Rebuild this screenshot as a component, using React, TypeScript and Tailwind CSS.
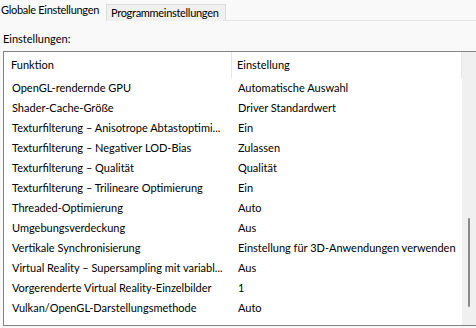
import React from 'react';

const rows: [string, string][] = [
  ['OpenGL-rendernde GPU', 'Automatische Auswahl'],
  ['Shader-Cache-Größe', 'Driver Standardwert'],
  ['Texturfilterung – Anisotrope Abtastoptimi...', 'Ein'],
  ['Texturfilterung – Negativer LOD-Bias', 'Zulassen'],
  ['Texturfilterung – Qualität', 'Qualität'],
  ['Texturfilterung – Trilineare Optimierung', 'Ein'],
  ['Threaded-Optimierung', 'Auto'],
  ['Umgebungsverdeckung', 'Aus'],
  ['Vertikale Synchronisierung', 'Einstellung für 3D-Anwendungen verwenden'],
  ['Virtual Reality – Supersampling mit variabl...', 'Aus'],
  ['Vorgerenderte Virtual Reality-Einzelbilder', '1'],
  ['Vulkan/OpenGL-Darstellungsmethode', 'Auto'],
];

export default function App() {
  return (
    <div
      className="w-[476px] h-[328px] overflow-hidden bg-[#f9f9f9] text-[11px] text-black flex flex-col"
      style={{ fontFamily: 'Lato, "Noto Sans", sans-serif' }}
    >
      {/* Tabs */}
      <div className="flex items-end h-[21px] shrink-0 tracking-[-0.3px]">
        <div className="w-[105px] h-[21px] pl-[1px] flex items-center bg-[#f9f9f9] whitespace-nowrap">
          Globale Einstellungen
        </div>
        <div className="ml-[1px] w-[120px] h-[17px] pl-[4px] flex items-center bg-[#f0f0f0] border border-b-0 border-[#dcdcdc] whitespace-nowrap overflow-hidden">
          Programmeinstellungen
        </div>
        <div className="flex-1 border-b border-[#e3e3e3]" />
      </div>

      <div className="pl-[3px] pt-[10px] h-[30px] shrink-0 leading-[16px]">Einstellungen:</div>

      {/* List */}
      <div className="ml-[3px] flex-1 mb-[2px] border border-r-0 border-[#828282] bg-white flex overflow-hidden">
        <div className="flex-1 flex flex-col">
          <div className="h-[26px] flex shrink-0">
            <div className="w-[228px] pl-[7px] flex items-center border-r border-[#e5e5e5]">Funktion</div>
            <div className="flex-1 pl-[5px] flex items-center border-r border-[#e5e5e5]">Einstellung</div>
          </div>
          {rows.map(([f, v]) => (
            <div key={f} className="h-[20px] flex shrink-0">
              <div className="w-[229px] pl-[8px] flex items-center whitespace-nowrap overflow-hidden">{f}</div>
              <div className="flex-1 pl-[5px] flex items-center whitespace-nowrap overflow-hidden">{v}</div>
            </div>
          ))}
        </div>
        <div className="w-[14px] shrink-0 bg-[#f0f0f0] flex flex-col items-center">
          <div className="mt-[166px] w-[2px] h-[89px] rounded-full bg-[#8a8a8a]" />
        </div>
      </div>
    </div>
  );
}
